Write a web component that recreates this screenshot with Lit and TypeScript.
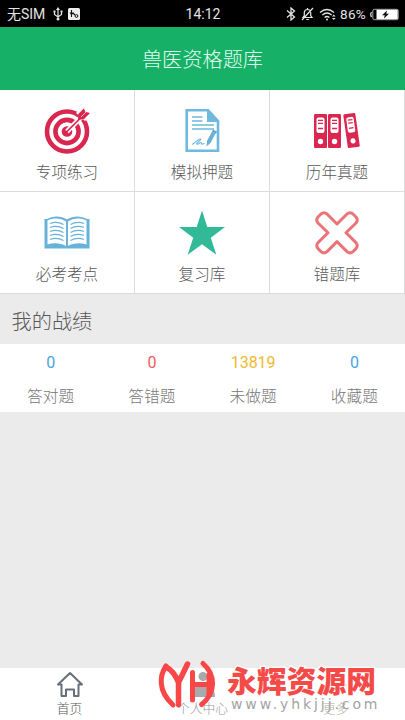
import { LitElement, html, css, svg } from "lit";
import { customElement } from "lit/decorators.js";

const target = svg`<svg width="46" height="46" viewBox="0 0 46 46">
  <g fill="none" stroke="#d92750">
    <circle cx="23" cy="23.5" r="20" stroke-width="4.6"/>
    <circle cx="23" cy="23.5" r="11.6" stroke-width="4.6"/>
  </g>
  <circle cx="23" cy="23.5" r="5.3" fill="#d92750"/>
  <path d="M23 23.5L40 6.500" stroke="#fff" stroke-width="5"/>
  <path d="M32 5l7-7 9 9-7 6z" fill="#fff"/>
  <path d="M22 24.500L36 10.500" stroke="#d92750" stroke-width="1.700"/>
  <path d="M34 12l.3-6L40 .3l1.200 3.500L46 5l-6 6z" fill="#d92750"/>
  <path d="M37 9l6-6" stroke="#fff" stroke-width=".7"/>
</svg>`;

const paper = svg`<svg width="46" height="46" viewBox="0 0 46 46">
  <path d="M7.700 2.200H29L39 13v29.800H7.700z" fill="#fff" stroke="#6db9df" stroke-width="2.600"/>
  <path d="M28 1.500L40 14H28z" fill="#6db9df"/>
  <path d="M13 9h10.500M13 13h10.500M13 17h22M13 21h22" stroke="#6db9df" stroke-width="1.300"/>
  <path d="M13 36.500c3-1.500 7-6.500 8.500-5.500s-5 4-3.500 5 3-2 4-1.500 0 2 1.500 1.500l2-.5" fill="none" stroke="#6db9df" stroke-width="1.100"/>
  <path d="M28 33l5-9.500 3.500 2-5 9.500-4 3.500z" fill="#6db0d6"/>
  <path d="M33.500 22.500l4 2.200" stroke="#5aa6cf" stroke-width="2.400"/>
</svg>`;

const binder = svg`
  <rect width="13" height="34" rx="1.200" fill="#d92750"/>
  <rect x="2.500" y="3.500" width="8" height="15.500" rx="2" fill="#fff"/>
  <path d="M4 6.300h5M4 9.300h5M4 14.500h5" stroke="#d92750" stroke-width="1.300"/>
  <circle cx="6.500" cy="27.500" r="2.700" fill="#fff"/>`;

const binders = svg`<svg width="46" height="46" viewBox="0 0 46 46">
  <g transform="translate(0 6)">${binder}</g>
  <g transform="translate(14 6)">${binder}</g>
  <g transform="translate(29.200 6.500) rotate(-8) scale(.93 1)">${binder}</g>
</svg>`;

const book = svg`<svg width="46" height="46" viewBox="0 0 46 46">
  <path d="M.5 9h2.500C9 5.500 17 5.500 23 9.500 29 5.500 37 5.500 43 9h2.500v29.500H.500z" fill="#67b2da"/>
  <path d="M3.500 10.500C10 7.500 17 8 22 11.500V36c-5-3-12-3.500-18.500-1.500zM42.500 10.500C36 7.500 29 8 24 11.500V36c5-3 12-3.500 18.500-1.500z" fill="#fff"/>
  <g fill="none" stroke="#67b2da" stroke-width="1.200">
    ${[13.5, 17.5, 21.5, 25.5, 29.5].map(
      (y) => svg`<path d="M6 ${y}q7-2.500 13.500 1M26.500 ${y + 1}q6.500-3.500 13.500-1"/>`
    )}
  </g>
</svg>`;

const star = svg`<svg width="46" height="46" viewBox="0 0 46 46">
  <path d="M23 .5L28.300 17H46L31.800 27.700 37.300 44.700 23 34.200 8.700 44.700 14.200 27.700 0 17h17.700z" fill="#32ba98"/>
</svg>`;

const cross = svg`<svg width="46" height="46" viewBox="0 0 46 46">
  <path d="M23 14L33 4Q36 1.500 39 4L42 7Q44.500 10 42 13L32 22.800 42 32.600Q44.500 35.600 42 38.600L39 41.600Q36 44.100 33 41.600L23 31.600 13 41.600Q10 44.100 7 41.600L4 38.600Q1.500 35.600 4 32.600L14 22.800 4 13Q1.500 10 4 7L7 4Q10 1.500 13 4z" fill="#fff" stroke="#eb7478" stroke-width="3" stroke-linejoin="round"/>
</svg>`;

const entries = [
  { icon: target, label: "专项练习" },
  { icon: paper, label: "模拟押题" },
  { icon: binders, label: "历年真题" },
  { icon: book, label: "必考考点" },
  { icon: star, label: "复习库" },
  { icon: cross, label: "错题库" },
];

const scores = [
  { value: 0, label: "答对题", tone: "blue" },
  { value: 0, label: "答错题", tone: "red" },
  { value: 13819, label: "未做题", tone: "amber" },
  { value: 0, label: "收藏题", tone: "blue" },
];

@customElement("status-bar")
class StatusBar extends LitElement {
  static styles = css`
    :host {
      display: grid;
      grid-template-columns: 1fr auto 1fr;
      align-items: center;
      height: 27px;
      padding: 1px 6px 0 7px;
      box-sizing: border-box;
      background: #000;
      color: #e4e4e4;
      font: 14px/26px Roboto, "Noto Sans CJK SC", sans-serif;
    }
    .side { display: flex; align-items: center; }
    .end { justify-content: flex-end; }
    .sim { width: 39px; white-space: nowrap; }
    .usb { margin-left: 6.500px; }
    .debug { margin-left: 5.500px; }
    .mute { margin-left: 5px; }
    .wifi { margin: 0 3px 0 5px; }
    .battery { margin-left: 4px; }
    .percent { font-size: 13.500px; letter-spacing: 0.300px; }
  `;
  render() {
    return html`
      <div class="side">
        <span class="sim">无SIM</span>
        <svg class="usb" width="10" height="14" viewBox="0 0 10 14" fill="none" stroke="#e4e4e4" stroke-width="1.200">
          <path d="M5 2v10M1.500 5v2.500L5 10l3.500-2.500V5" />
          <path d="M5 0L3 3h4z" fill="#e4e4e4" stroke="none" />
          <circle cx="5" cy="12" r="1.500" fill="#e4e4e4" stroke="none" />
          <path d="M.5 4.500h2M7.500 4.500h2" stroke-width="2" />
        </svg>
        <svg class="debug" width="12" height="12" viewBox="0 0 12 12">
          <rect width="12" height="12" rx="1.500" fill="#eee" />
          <path d="M3.500 2v7M2 4.500l1.500 2 2-2M5 5l2 2" fill="none" stroke="#111" stroke-width="1.100" />
          <circle cx="8.500" cy="8" r="1.400" fill="none" stroke="#111" />
        </svg>
      </div>
      <span>14:12</span>
      <div class="side end">
        <svg width="10" height="14" viewBox="0 0 10 14" fill="none" stroke="#e4e4e4" stroke-width="1.300">
          <path d="M1 3.500l7.500 6.500L5 13V1l3.500 3L1 10.500" />
        </svg>
        <svg class="mute" width="13" height="14" viewBox="0 0 13 14" fill="none" stroke="#e4e4e4" stroke-width="1.200">
          <path d="M2 10.500h9L9.700 8.500V5.500Q9.500 2.500 6.500 2.500T3.300 5.500v3zM5.300 12.500h2.500M12 1L1 13M6.500 1v1.500" />
        </svg>
        <svg class="wifi" width="18" height="13" viewBox="0 0 18 13" fill="none" stroke="#e4e4e4" stroke-width="1.300">
          <path d="M1 4.500q7-6 14 0M3.300 7q4.700-4 9.400 0M5.600 9.500q2.400-2 4.800 0" />
          <circle cx="8" cy="11.500" r="1" fill="#e4e4e4" stroke="none" />
          <path d="M13 8.500l1.800-2 1.800 2zM13 10l1.800 2 1.800-2z" fill="#e4e4e4" stroke="none" />
        </svg>
        <span class="percent">86%</span>
        <svg class="battery" width="29" height="13" viewBox="0 0 29 13">
          <path d="M1.500 4Q0 6.500 1.500 9" fill="none" stroke="#ddd" stroke-width="1.300" />
          <rect x="2.800" y="1.300" width="25.400" height="10.400" rx="1.500" fill="#000" stroke="#aaa" />
          <rect x="6.500" y="1.800" width="21.200" height="9.400" fill="#fff" />
          <path d="M17 2.500l-5 4.700h2.700L14 10.500l5-4.700h-2.700z" fill="#111" />
        </svg>
      </div>
    `;
  }
}

@customElement("site-mark")
class SiteMark extends LitElement {
  static styles = css`
    :host { display: block; }
    svg { display: block; }
    .name { font: 900 30px "Noto Sans CJK SC", sans-serif; fill: #f44a48; stroke: #fff; stroke-width: 2.500px; paint-order: stroke; }
    .bold { stroke: #f44a48; stroke-width: 0.700px; }
    .address { font: 14px "DejaVu Sans", sans-serif; fill: #a3a3a3; }
  `;
  render() {
    return html`<svg width="225" height="58" viewBox="155 658 225 58">
      <g fill="none" stroke-linecap="round" stroke-linejoin="round" stroke="#f94646">
        <path d="M166 666C160 675 157 690 173 705" stroke-width="5" />
        <path d="M166 667Q174 671 178.500 682.500L187.500 664M178.500 682V704.500" stroke-width="5.500" />
        <path d="M192.500 672.500V700M192.500 684.500H209M209 675V695" stroke-width="5" />
        <path d="M203 663.500C216 675 216 693 201.500 704.500" stroke-width="5" />
      </g>
      <text class="name" x="227" y="691.500" textLength="149" lengthAdjust="spacingAndGlyphs">永辉资源网</text>
      <text class="address" x="231" y="709" textLength="146.500">www.yhkjjj.com</text>
    </svg>`;
  }
}

@customElement("app-root")
class AppRoot extends LitElement {
  static styles = css`
    :host {
      display: flex;
      flex-direction: column;
      position: relative;
      height: 720px;
      overflow: hidden;
      background: #ebebeb;
      color: #585858;
      font-family: "Noto Sans CJK SC", sans-serif;
      font-weight: 300;
    }
    .title {
      display: flex;
      align-items: center;
      justify-content: center;
      height: 63px;
      background: #17b067;
      color: #e0fff0;
      font-size: 20.200px;
    }
    .entries {
      display: grid;
      grid-template-columns: repeat(3, 135px);
      grid-auto-rows: 102px;
    }
    .entry {
      display: flex;
      flex-direction: column;
      align-items: center;
      box-sizing: border-box;
      padding-top: 18px;
      background: #fff;
      border-right: 1px solid #dcdcdc;
      border-bottom: 1px solid #dcdcdc;
      font-size: 15.600px;
      line-height: 24px;
    }
    .entry svg { overflow: visible; }
    .caption { margin-top: 5px; }
    .heading {
      height: 50px;
      padding-left: 11.500px;
      font-size: 20.200px;
      line-height: 53px;
    }
    .scores {
      display: grid;
      grid-template-columns: repeat(4, 1fr);
      height: 68px;
      background: #fff;
      text-align: center;
    }
    .value { padding-top: 6px; font: 400 16px/25px Roboto, sans-serif; }
    .blue { color: #4aa3df; }
    .red { color: #ec5a62; }
    .amber { color: #f0b92e; }
    .label { margin-top: 8px; color: #777; font-size: 15.700px; line-height: 25px; }
    .tabs {
      display: grid;
      grid-template-columns: repeat(3, 1fr);
      height: 52px;
      margin-top: auto;
      padding: 0 3px;
      background: #fff;
    }
    .tab {
      display: flex;
      flex-direction: column;
      align-items: center;
      padding-top: 3px;
      font-size: 12.800px;
      line-height: 18px;
    }
    .tab svg { margin-bottom: 1px; }
    .soft { color: #999; }
    .faint { color: #b4b4ac; }
    .mark { position: absolute; left: 155px; top: 658px; }
  `;
  render() {
    return html`
      <status-bar></status-bar>
      <div class="title">兽医资格题库</div>
      <div class="entries">
        ${entries.map((e) => html`<div class="entry">${e.icon}<span class="caption">${e.label}</span></div>`)}
      </div>
      <div class="heading">我的战绩</div>
      <div class="scores">
        ${scores.map(
          (s) => html`<div><div class="value ${s.tone}">${s.value}</div><div class="label">${s.label}</div></div>`
        )}
      </div>
      <div class="tabs">
        <div class="tab">
          <svg width="28" height="27" viewBox="0 0 28 27" fill="none" stroke="#677078" stroke-width="2" stroke-linejoin="round" stroke-linecap="round">
            <path d="M2 13.500L14 2l12 11.500h-3.500V25h-4.500v-6.500h-8V25H5.500V13.500z" />
          </svg>
          <span>首页</span>
        </div>
        <div class="tab soft">
          <svg width="28" height="27" viewBox="0 0 28 27" fill="#aaa">
            <circle cx="14" cy="5.500" r="4.500" />
            <path d="M2 26q0-12 12-12t12 12z" />
          </svg>
          <span>个人中心</span>
        </div>
        <div class="tab faint">
          <svg width="28" height="27" viewBox="0 0 28 27" fill="#bbb">
            <circle cx="6" cy="14" r="2.500" /><circle cx="14" cy="14" r="2.500" /><circle cx="22" cy="14" r="2.500" />
          </svg>
          <span>更多</span>
        </div>
      </div>
      <site-mark class="mark"></site-mark>
    `;
  }
}
